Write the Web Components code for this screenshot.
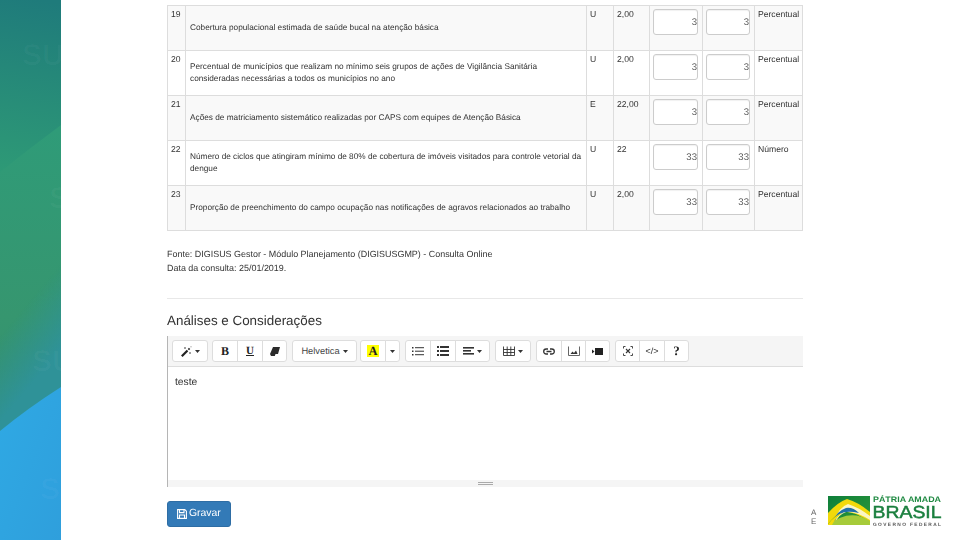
<!DOCTYPE html>
<html lang="pt"><head><meta charset="utf-8"><title>Análises</title>
<style>
html,body{margin:0;height:540px;overflow:hidden;background:#fff}
body{font-family:"Liberation Sans",Arial,sans-serif;color:#333;text-rendering:geometricPrecision}
</style></head><body>
<x-page>
  <x-side slot="side"></x-side>
  <x-goals>
    <x-goal n="19" u="U" m="2,00" a="3" b="3" t="Percentual">Cobertura populacional estimada de saúde bucal na atenção básica</x-goal>
    <x-goal n="20" u="U" m="2,00" a="3" b="3" t="Percentual">Percentual de municípios que realizam no mínimo seis grupos de ações de Vigilância Sanitária consideradas necessárias a todos os municípios no ano</x-goal>
    <x-goal n="21" u="E" m="22,00" a="3" b="3" t="Percentual">Ações de matriciamento sistemático realizadas por CAPS com equipes de Atenção Básica</x-goal>
    <x-goal n="22" u="U" m="22" a="33" b="33" t="Número">Número de ciclos que atingiram mínimo de 80% de cobertura de imóveis visitados para controle vetorial da dengue</x-goal>
    <x-goal n="23" u="U" m="2,00" a="33" b="33" t="Percentual">Proporção de preenchimento do campo ocupação nas notificações de agravos relacionados ao trabalho</x-goal>
  </x-goals>
  <x-source></x-source>
  <x-editor>teste</x-editor>
  <x-save>Gravar</x-save>
  <x-brand slot="brand"></x-brand>
</x-page>
<script>
function def(name, css, html){
  customElements.define(name, class extends HTMLElement{
    connectedCallback(){
      if(this.shadowRoot) return;
      const s=this.attachShadow({mode:'open'});
      s.innerHTML='<style>'+css+'</style>'+(typeof html==='function'?html(this):html);
    }
  });
}
def('x-page',`:host{display:flex;width:960px;height:540px;overflow:hidden}
 .side{flex:0 0 61px;height:540px}
 .main{flex:0 0 636px;margin-left:106px;padding-top:5px;box-sizing:border-box;height:540px;filter:blur(.3px)}
 .right{flex:1;display:flex;flex-direction:column;justify-content:flex-end;padding-bottom:13px}`,
 `<div class="side"><slot name="side"></slot></div><div class="main"><slot></slot></div><div class="right"><slot name="brand"></slot></div>`);

def('x-side',`:host{display:block;width:61px;height:540px;overflow:hidden}svg{display:block}text{font:bold 30px "Liberation Sans",sans-serif;fill:#fff;fill-opacity:.028}`,
`<svg width="61" height="540" viewBox="0 0 61 540">
<defs>
<linearGradient id="a" gradientUnits="userSpaceOnUse" x1="40" y1="0" x2="10" y2="175"><stop offset="0" stop-color="#1f7b7b"/><stop offset="1" stop-color="#2e9a76"/></linearGradient>
<linearGradient id="b" gradientUnits="userSpaceOnUse" x1="0" y1="130" x2="0" y2="440"><stop offset="0" stop-color="#2f9b78"/><stop offset=".6" stop-color="#36966f"/><stop offset="1" stop-color="#338e6f"/></linearGradient>
<linearGradient id="c" gradientUnits="userSpaceOnUse" x1="22" y1="310" x2="64" y2="345"><stop offset="0" stop-color="#2f9295" stop-opacity="0"/><stop offset="1" stop-color="#2f9298"/></linearGradient>
<linearGradient id="m" gradientUnits="userSpaceOnUse" x1="0" y1="180" x2="0" y2="300"><stop offset="0" stop-color="#000"/><stop offset="1" stop-color="#fff"/></linearGradient>
<mask id="fade" maskUnits="userSpaceOnUse" x="0" y="0" width="61" height="540"><rect width="61" height="540" fill="url(#m)"/></mask>
<linearGradient id="d" x1="0" y1="0" x2="1" y2="1"><stop offset="0" stop-color="#2fa9e4"/><stop offset="1" stop-color="#2f9fdc"/></linearGradient>
</defs>
<rect width="61" height="540" fill="url(#a)"/>
<path d="M0 172Q30 148 61 125V540H0Z" fill="url(#b)"/>
<rect y="125" width="61" height="320" fill="url(#c)" mask="url(#fade)"/>
<path d="M0 431Q28 408 61 387V540H0Z" fill="url(#d)"/>
<text x="22" y="65">SU</text><text x="49" y="208">S</text><text x="32" y="371">SU</text><text x="40" y="499">SU</text>
</svg>`);

def('x-goals',`:host{display:block;border-top:1px solid #ddd;border-left:1px solid #ddd;width:636px;box-sizing:border-box}
 ::slotted(x-goal:nth-of-type(odd)){background:#f9f9f9}`,`<slot></slot>`);

def('x-goal',`:host{display:grid;grid-template-columns:18px 401px 27px 36px 53px 52px 48px;height:45px;font-size:8.6px;line-height:12px;color:#333;box-sizing:border-box;border-bottom:1px solid #ddd}
 div{border-right:1px solid #ddd;box-sizing:border-box}
 .d{display:flex;align-items:center;padding:0 4px 0 4px;font-size:8.25px}
 .d span{display:block;margin-top:-1px}
 .i{padding:3px 3px 0 3px}
 .c{padding:2px 0 0 3px}
 .f{width:45px;height:26px;box-sizing:border-box;border:1px solid #ccc;border-radius:3px;background:#fff;text-align:right;line-height:26px;font-size:9.6px;color:#555;box-shadow:inset 0 1px 1px rgba(0,0,0,.06)}
 .i.b .f{width:44px}`,
 h=>`<div class="c">${h.getAttribute('n')}</div><div class="d"><span><slot></slot></span></div><div class="c">${h.getAttribute('u')}</div><div class="c">${h.getAttribute('m')}</div><div class="i"><div class="f">${h.getAttribute('a')}</div></div><div class="i b"><div class="f">${h.getAttribute('b')}</div></div><div class="c">${h.getAttribute('t')}</div>`);

def('x-source',`:host{display:block;margin-top:16px;font-size:8.95px;line-height:14px;color:#333}
 hr{border:0;border-top:1px solid #e8e8e8;margin:23px 0 0}
 h3{margin:13px 0 6px;font:400 13.4px/18px "Liberation Sans",sans-serif;color:#333}`,
 `Fonte: DIGISUS Gestor - Módulo Planejamento (DIGISUSGMP) - Consulta Online<br>Data da consulta: 25/01/2019.<hr><h3>Análises e Considerações</h3>`);

const ic={
 wand:'<svg width="11" height="11" viewBox="0 0 11 11"><path d="M.8 10.200L6.500 4.500" stroke="#222" stroke-width="2.2"/><path d="M7.400 3.600L8.600 2.400" stroke="#222" stroke-width="1.800"/><path d="M4 1v2M3 2h2M9 6v2M8 7h2M10 .3v1" stroke="#777" stroke-width=".9"/></svg>',
 eraser:'<svg width="10" height="9" viewBox="0 0 10 9"><path d="M3 0H10L8 7H5.500L4.800 9H1L0 7Z" fill="#2b2b2b"/></svg>',
 ul:'<svg width="12" height="9" viewBox="0 0 12 9" fill="#333"><rect x="0" y="0" width="1.500" height="1.500"/><rect x="0" y="3.500" width="1.500" height="1.500"/><rect x="0" y="7" width="1.500" height="1.500"/><rect x="3" y=".2" width="9" height="1"/><rect x="3" y="3.700" width="9" height="1"/><rect x="3" y="7.200" width="9" height="1"/></svg>',
 ol:'<svg width="12" height="10" viewBox="0 0 12 10" fill="#333"><rect x="0" y="0" width="2" height="2"/><rect x="0" y="4" width="2" height="2"/><rect x="0" y="8" width="2" height="2"/><rect x="3" y="0" width="9" height="2"/><rect x="3" y="4" width="9" height="2"/><rect x="3" y="8" width="9" height="2"/></svg>',
 align:'<svg width="11" height="8" viewBox="0 0 11 8" fill="#333"><rect width="11" height="1.600"/><rect y="3" width="8" height="1.600"/><rect y="6" width="11" height="1.600"/></svg>',
 table:'<svg width="12" height="10" viewBox="0 0 12 10" fill="none" stroke="#333" stroke-width=".9"><path d="M.5 .5V9.500H11.500V.5M.5 3.500H11.500M.5 6.500H11.500M4.200 .5V9.500M7.800 .5V9.500"/></svg>',
 link:'<svg width="12" height="7" viewBox="0 0 12 7" fill="none" stroke="#333" stroke-width="1.300"><path d="M5 1H3.200A2.500 2.500 0 0 0 3.200 6H5M7 1H8.800A2.500 2.500 0 0 1 8.800 6H7M3.500 3.500H8.500"/></svg>',
 pic:'<svg width="12" height="10" viewBox="0 0 12 10" fill="none"><path d="M.5 .5V9.500H11.500V.5" stroke="#555" stroke-width=".9"/><path d="M2.500 8L4.500 5.500L6 7L8 4.500L9.500 8Z" fill="#333"/></svg>',
 vid:'<svg width="11" height="7" viewBox="0 0 11 7" fill="#222"><rect x="3" y="0" width="8" height="7"/><path d="M0 1.500L2.500 3.500L0 5.500Z"/></svg>',
 full:'<svg width="10" height="10" viewBox="0 0 10 10" fill="none" stroke="#333" stroke-width="1.100"><path d="M3 3L7 7M7 3L3 7"/><path d="M.5 2.500V.5H2.500M7.500 .5H9.500V2.500M9.500 7.500V9.500H7.500M2.500 9.500H.5V7.500" stroke-width=".9"/></svg>',
 caret:'<svg width="5" height="3" viewBox="0 0 5 3" fill="#333"><path d="M0 0H5L2.500 3Z"/></svg>'
};
const B=(w,html)=>`<span class="b" style="width:${w}px">${html}</span>`;
const G=(x,...k)=>`<span class="g" style="margin-right:${x}px">${k.join('')}</span>`;
def('x-editor',`:host{display:block;width:636px;height:151px;box-sizing:border-box;border-left:1px solid #b5b5b5;color:#333}
 .tb{height:31px;background:#f5f5f5;border-bottom:1px solid #ddd;box-sizing:border-box;padding:4px 0 0 4px;display:flex}
 .g{display:flex;height:22px}
 .b{display:flex;align-items:center;justify-content:center;gap:3px;box-sizing:border-box;height:22px;background:#fff;border:1px solid #ddd;margin-left:-1px;font-size:9.3px;color:#444}
 .g .b:first-child{border-radius:3px 0 0 3px;margin-left:0}.g .b:last-child{border-radius:0 3px 3px 0}.g .b:only-child{border-radius:3px}
 .body{height:113px;background:#fff;padding:8px 7px;box-sizing:border-box;font-size:10.3px;line-height:15px;color:#333}
 .st{height:7px;background:#f5f5f5;display:flex;justify-content:center;align-items:center}
 .st i{display:block;width:15px;height:3px;border-top:1px solid #aaa;border-bottom:1px solid #aaa;box-sizing:border-box}
 .serif{font:bold 12px "Liberation Serif",serif;color:#222}
 .ul{font:bold 11px "Liberation Serif",serif;text-decoration:underline;color:#222}
 .a{background:#ffff00;font:bold 12.5px/12px "Liberation Serif",serif;color:#222;padding:0 1.5px}
 .q{font:bold 13px "Liberation Serif",serif;color:#222}
 .code{font:9px "Liberation Sans",sans-serif;color:#333}`,
 h=>`<div class="tb">
 ${G(4,B(36,ic.wand+ic.caret))}
 ${G(5,B(26,'<span class="serif">B</span>'),B(26,'<span class="ul">U</span>'),B(25,ic.eraser))}
 ${G(3,B(65,'Helvetica '+ic.caret))}
 ${G(5,B(26,'<span class="a">A</span>'),B(15,ic.caret))}
 ${G(5,B(26,ic.ul),B(26,ic.ol),B(35,ic.align+ic.caret))}
 ${G(5,B(36,ic.table+ic.caret))}
 ${G(5,B(26,ic.link),B(25,ic.pic),B(25,ic.vid))}
 ${G(0,B(25,ic.full),B(26,'<span class="code">&lt;/&gt;</span>'),B(25,'<span class="q">?</span>'))}
 </div><div class="body"><slot></slot></div><div class="st"><i></i></div>`);

def('x-save',`:host{display:flex;align-items:center;gap:2px;margin-top:14px;width:64px;height:26px;box-sizing:border-box;padding-left:9px;background:#337ab7;border:1px solid #2e6da4;border-radius:3px;color:#fff;font-size:10.4px;line-height:12px}
 svg{display:block;flex:none}span{display:block}`,
 `<svg width="10" height="10" viewBox="0 0 10 10" fill="none" stroke="#fff" stroke-width="1.100"><path d="M.6.6H7.800L9.400 2.200V9.400H.6Z"/><path d="M2.500.6V3.600H7V.6M2.500 9.400V6H7.500V9.400"/></svg><span><slot></slot></span>`);

def('x-brand',`:host{display:flex;align-items:flex-start;padding-left:8px;filter:blur(.25px)}
 .e{font:8px/9px "Liberation Sans",sans-serif;color:#666;width:17px;padding-top:12px}
 svg{overflow:visible}
 text{font-family:"Liberation Sans",sans-serif}`,
 `<div class="e">A<br>E</div><svg width="115" height="31" viewBox="0 0 115 31" style="display:block">
 <defs><linearGradient id="g" x1="0" y1="0" x2="1" y2="1"><stop offset="0" stop-color="#0e7f3a"/><stop offset="1" stop-color="#2f9a3a"/></linearGradient></defs>
 <rect width="42" height="29" fill="url(#g)"/>
 <path d="M0 17Q10 6 19 3Q30 6 42 16V26Q25 14 14 16Q6 20 0 28Z" fill="#f2d90a"/>
 <path d="M6 25Q11 11 20 8Q30 11 42 20V24Q28 15 18 16Q10 19 8 26Z" fill="#fbf6c4"/>
 <path d="M5 25Q9 15 18 12Q25 11 31 17Q18 14 12 18Q8 21 7 26Z" fill="#1f6fa8"/>
 <path d="M0 29Q22 12 42 25V29Z" fill="#a6cb3a"/>
 <path d="M0 28Q6 20 14 17Q6 24 4 29H0Z" fill="#f2d90a"/>
 <text x="45" y="6.200" font-size="8" font-weight="700" fill="#1f8a42" textLength="68" lengthAdjust="spacingAndGlyphs">PÁTRIA AMADA</text>
 <text x="44.500" y="22" font-size="17.500" fill="#1a7f3e" stroke="#1a7f3e" stroke-width=".5" textLength="69" lengthAdjust="spacingAndGlyphs">BRASIL</text>
 <text x="45" y="29.500" font-size="4.800" font-weight="700" fill="#555" textLength="68">GOVERNO FEDERAL</text>
 </svg>`);
</script>
</body></html>
